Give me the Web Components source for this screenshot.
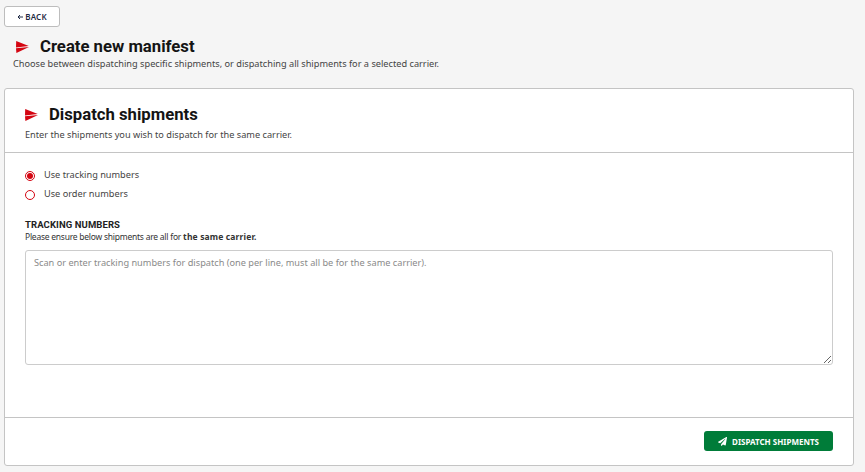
<!DOCTYPE html>
<html><head><meta charset="utf-8">
<style>
html,body{margin:0;padding:0;background:#f5f5f5;height:472px;overflow:hidden;font-family:"Noto Sans",sans-serif;color:#1a1a1a}
x-field strong{letter-spacing:.15px;font-weight:700}
</style></head><body>
<template id="t-mark"><style>:host{display:inline-flex;width:13px;height:12px}svg{display:block}</style>
<svg width="13" height="12" viewBox="0 0 13 12"><path d="M.2 0 12.8 5 0 6.4ZM0 7.2 13 5.9 .4 12Z" fill="#d40511"/></svg></template>

<template id="t-page"><style>:host{display:flex;flex-direction:column;height:472px;box-sizing:border-box;padding:6px 4px 6px 4px}</style><slot></slot></template>

<template id="t-back"><style>:host{display:flex;align-self:flex-start;align-items:center;justify-content:center;width:54px;height:19px;border:1px solid #bdbdbd;border-radius:3px;background:#fff;font:600 8px "Noto Sans",sans-serif;letter-spacing:.2px;color:#1f2a44;gap:2px}svg{display:block}</style>
<svg width="6" height="6" viewBox="0 0 6 6"><path d="M6 3H1M3 1 1 3l2 2" fill="none" stroke="#1f2a44"/></svg><slot></slot></template>

<template id="t-head"><style>:host{display:block;padding:10px 0 0 9px}.r{display:flex;align-items:center;gap:11px;padding-left:3px;font:700 16.7px/20px Roboto,sans-serif;color:#141414}p{margin:1px 0 0;font:400 9.2px/12px "Noto Sans",sans-serif;color:#444}</style>
<div class="r"><x-mark></x-mark><span><slot name="title"></slot></span></div><p><slot name="sub"></slot></p></template>

<template id="t-card"><style>:host{display:flex;flex-direction:column;flex:1;margin-top:18px;background:#fff;border:1px solid #c4c4c4;border-radius:3px;width:850px;box-sizing:border-box}
header{padding:16px 20px 0;height:64px;box-sizing:border-box;border-bottom:1px solid #c4c4c4}
.r{display:flex;align-items:center;gap:11px;font:700 16.7px/20px Roboto,sans-serif;color:#141414}
p{margin:4px 0 0;font:400 9.2px/12px "Noto Sans",sans-serif;color:#444}
main{flex:1;padding:13px 20px 0}
footer{height:48px;box-sizing:border-box;border-top:1px solid #c4c4c4;display:flex;justify-content:flex-end;align-items:flex-start;padding:13px 20px 0}
</style>
<header><div class="r"><x-mark></x-mark><span><slot name="title"></slot></span></div><p><slot name="sub"></slot></p></header>
<main><slot></slot></main><footer><slot name="foot"></slot></footer></template>

<template id="t-radio"><style>:host{display:flex;align-items:center;gap:9px;height:19px;font:400 9.2px/12px "Noto Sans",sans-serif;color:#444}
i{box-sizing:border-box;width:10px;height:10px;border:1px solid #d40511;border-radius:50%;display:block;padding:1px}
:host([on]) i::before{content:"";display:block;width:6px;height:6px;border-radius:50%;background:#d40511}
span{margin-top:-2px}</style><i></i><span><slot></slot></span></template>

<template id="t-field"><style>:host{display:block;margin-top:15px}
b{display:block;font:700 9.5px/12px Roboto,sans-serif;letter-spacing:.1px;color:#222}
small{display:block;font:400 8.5px/11px "Noto Sans",sans-serif;letter-spacing:-.24px;color:#333}
textarea{display:block;box-sizing:border-box;width:100%;height:115px;margin-top:8px;padding:6px 8px;border:1px solid #ccc;border-radius:3px;outline:0;background:#fff;font:400 9.2px/12px "Noto Sans",sans-serif;color:#333}
textarea::placeholder{color:#8a8a8a;opacity:1}</style>
<b><slot name="label"></slot></b><small><slot name="hint"></slot></small>
<textarea placeholder="Scan or enter tracking numbers for dispatch (one per line, must all be for the same carrier)."></textarea></template>

<template id="t-btn"><style>:host{display:flex;align-items:center;justify-content:center;gap:5px;width:129px;height:20px;background:#007c39;border-radius:3px;color:#fff;font:700 8px "Noto Sans",sans-serif;letter-spacing:0}svg{display:block}</style>
<svg width="9" height="9" viewBox="0 0 512 512"><path fill="#fff" d="M476 3 12 271c-17 10-15 35 3 42l107 45 288-254c6-5 13 3 8 9L176 407v80c0 23 28 32 42 15l64-78 126 53c14 6 31-3 33-18L512 28c3-20-18-35-36-25Z"/></svg><slot></slot></template>

<x-page>
  <x-back>BACK</x-back>
  <x-head><span slot="title">Create new manifest</span><span slot="sub">Choose between dispatching specific shipments, or dispatching all shipments for a selected carrier.</span></x-head>
  <x-card>
    <span slot="title">Dispatch shipments</span>
    <span slot="sub">Enter the shipments you wish to dispatch for the same carrier.</span>
    <x-radio on>Use tracking numbers</x-radio>
    <x-radio>Use order numbers</x-radio>
    <x-field><span slot="label">TRACKING NUMBERS</span><span slot="hint">Please ensure below shipments are all for <strong>the same carrier.</strong></span></x-field>
    <x-btn slot="foot">DISPATCH SHIPMENTS</x-btn>
  </x-card>
</x-page>
<script>
for (const [tag,id] of [['x-mark','t-mark'],['x-page','t-page'],['x-back','t-back'],['x-head','t-head'],['x-card','t-card'],['x-radio','t-radio'],['x-field','t-field'],['x-btn','t-btn']]) {
  customElements.define(tag, class extends HTMLElement {
    constructor(){super();this.attachShadow({mode:'open'}).appendChild(document.getElementById(id).content.cloneNode(true));}
  });
}
</script>
</body></html>
